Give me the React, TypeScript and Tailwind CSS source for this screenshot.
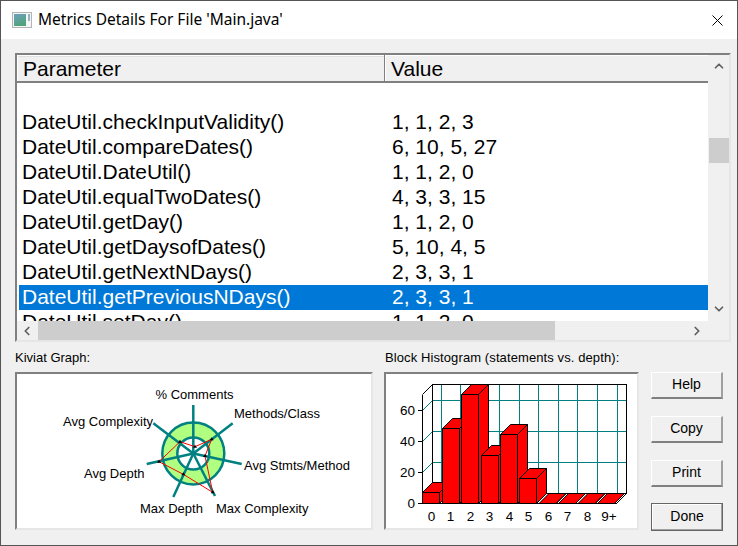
import { ChevronUp, ChevronDown, ChevronLeft, ChevronRight } from "lucide-react";

const ROWS = [
  ["", ""],
  ["DateUtil.checkInputValidity()", "1, 1, 2, 3"],
  ["DateUtil.compareDates()", "6, 10, 5, 27"],
  ["DateUtil.DateUtil()", "1, 1, 2, 0"],
  ["DateUtil.equalTwoDates()", "4, 3, 3, 15"],
  ["DateUtil.getDay()", "1, 1, 2, 0"],
  ["DateUtil.getDaysofDates()", "5, 10, 4, 5"],
  ["DateUtil.getNextNDays()", "2, 3, 3, 1"],
  ["DateUtil.getPreviousNDays()", "2, 3, 3, 1"],
  ["DateUtil.setDay()", "1, 1, 2, 0"],
];

const SPOKES = [
  [193.3, 405],
  [232.7, 423.3],
  [241.7, 464],
  [215, 496],
  [173.3, 497],
  [146.7, 464],
  [153.3, 423.3],
];

const RED = [
  [195, 446.7],
  [211.7, 439.3],
  [205, 456],
  [212.7, 492.3],
  [183.3, 474.3],
  [159, 461.7],
  [180, 441.7],
];

const KIVIAT_LABELS: [string, number, number][] = [
  ["% Comments", 155.5, 399],
  ["Methods/Class", 234, 418],
  ["Avg Complexity", 63, 426],
  ["Avg Stmts/Method", 244, 470],
  ["Avg Depth", 84, 478],
  ["Max Depth", 140, 513],
  ["Max Complexity", 216, 513],
];

const BARS = [
  [422.5, 492.5],
  [442.5, 428.5],
  [461.5, 394.5],
  [481.5, 455.5],
  [500.5, 434.5],
  [519.5, 478.5],
  [539, 503.5],
  [558.5, 503.5],
  [578, 503.5],
  [597.5, 503.5],
];

const X_LABELS: [string, number][] = [
  ["0", 431.5],
  ["1", 450.5],
  ["2", 470.5],
  ["3", 489.5],
  ["4", 509.5],
  ["5", 528.5],
  ["6", 548.5],
  ["7", 567.5],
  ["8", 587.5],
  ["9+", 609],
];

function Kiviat() {
  return (
    <svg viewBox="17 374 354 154" className="h-full w-full">
      <circle cx="193.3" cy="453.5" r="31" fill="#b0ff80" stroke="#008080" strokeWidth="2.5" />
      <circle cx="193.3" cy="453.5" r="16" fill="#fff" stroke="#008080" strokeWidth="2.5" />
      {SPOKES.map(([x, y]) => (
        <line key={x} x1="193.3" y1="453.5" x2={x} y2={y} stroke="#008080" strokeWidth="2.5" />
      ))}
      <polygon points={RED.map((p) => p.join(",")).join(" ")} fill="none" stroke="#ff0000" strokeWidth="1" />
      {RED.map(([x, y]) => (
        <polygon key={x} points={`${x - 2},${y + 1} ${x + 2},${y + 1} ${x},${y - 2}`} fill="#000" />
      ))}
      {KIVIAT_LABELS.map(([label, x, y]) => (
        <text key={label} x={x} y={y} fontSize="13" fill="#000" fontFamily="'Liberation Sans', sans-serif">
          {label}
        </text>
      ))}
    </svg>
  );
}

function Histogram() {
  return (
    <svg viewBox="386 374 251 154" className="h-full w-full" shapeRendering="crispEdges">
      {[400.5, 431.5, 462.5].map((y) => (
        <line key={y} x1="432.5" y1={y} x2="626.5" y2={y} stroke="#008080" />
      ))}
      {[441.5, 460.5, 479.5, 499.5, 519.5, 538.5, 558.5, 577.5, 597.5, 617.5].map((x) => (
        <line key={x} x1={x} y1="384.5" x2={x} y2="493.5" stroke="#008080" />
      ))}
      <g shapeRendering="auto">
        {[410.5, 441.5, 472.5].map((y) => (
          <line key={y} x1="422.5" y1={y} x2="432.5" y2={y - 10} stroke="#008080" />
        ))}
        <line x1="422.5" y1="394.5" x2="432.5" y2="384.5" stroke="#000" />
        <line x1="616.5" y1="503.5" x2="626.5" y2="493.5" stroke="#000" />
      </g>
      <path d="M432.5 493.5V384.5H626.5V493.5H432.5" fill="none" stroke="#000" />
      <path d="M422.5 394.5V503.5H616.5" fill="none" stroke="#000" />
      {[410.5, 441.5, 472.5, 503.5].map((y) => (
        <line key={y} x1="418" y1={y} x2="422.5" y2={y} stroke="#000" />
      ))}
      <g shapeRendering="auto">
        {BARS.map(([x, top]) => {
          const r = x + 17;
          return (
            <g key={x} fill="#ff0000" stroke="#000" strokeLinejoin="round">
              <polygon points={`${r},${top} ${r + 10},${top - 10} ${r + 10},493.5 ${r},503.5`} />
              <polygon points={`${x},${top} ${x + 10},${top - 10} ${r + 10},${top - 10} ${r},${top}`} />
              <rect x={x} y={top} width="17" height={503.5 - top} />
            </g>
          );
        })}
        {[
          ["60", 400, 415],
          ["40", 400, 446],
          ["20", 400, 477],
          ["0", 407.5, 508],
        ].map(([t, x, y]) => (
          <text key={t} x={x} y={y} fontSize="13.5" fill="#000" fontFamily="'Liberation Sans', sans-serif">
            {t}
          </text>
        ))}
        {X_LABELS.map(([t, x]) => (
          <text key={t} x={x} y="521" textAnchor="middle" fontSize="13.5" fill="#000" fontFamily="'Liberation Sans', sans-serif">
            {t}
          </text>
        ))}
      </g>
    </svg>
  );
}

function Btn({ label, primary }: { label: string; primary?: boolean }) {
  return (
    <div
      className={
        primary
          ? "-mt-[1px] flex h-[28px] w-[72px] items-center justify-center border border-[#666] bg-[#f0f0f0] pb-[1px] text-[14px] text-black shadow-[inset_-1px_-1px_0_#a0a0a0,inset_1px_1px_0_#fff]"
          : "flex h-[27px] w-[72px] items-center justify-center border-t border-l border-white border-r-2 border-b-2 border-r-[#a0a0a0] border-b-[#808080] bg-[#f0f0f0] pb-[1px] text-[14px] text-black"
      }
    >
      {label}
    </div>
  );
}

export default function App() {
  return (
    <div className="flex h-[546px] w-[738px] flex-col overflow-hidden border border-[#555] bg-[#f0f0f0] font-['Liberation_Sans',sans-serif]">
      <div className="flex h-[38px] shrink-0 items-center bg-white pl-[11px] pr-[14px]">
        <svg width="20" height="16" viewBox="0 0 20 16" className="shrink-0">
          <defs>
            <linearGradient id="ic" x1="0" y1="0" x2="0.4" y2="1">
              <stop offset="0" stopColor="#6f9fc0" />
              <stop offset="1" stopColor="#4fa57a" />
            </linearGradient>
          </defs>
          <rect x="0.5" y="0.5" width="19" height="15" fill="#f6f6f6" stroke="#b4b4b4" />
          <rect x="2" y="2" width="12" height="12" fill="url(#ic)" />
          <rect x="16" y="2" width="2" height="7" fill="#8fb4c8" />
        </svg>
        <span className="ml-[6px] font-['Noto_Sans',sans-serif] text-[15.5px] text-black">Metrics Details For File 'Main.java'</span>
        <svg width="11" height="11" viewBox="0 0 11 11" className="ml-auto shrink-0">
          <path d="M0.5 0.5L10.5 10.5M10.5 0.5L0.5 10.5" stroke="#000" strokeWidth="1" fill="none" />
        </svg>
      </div>

      <div className="ml-[14px] mt-[14px] flex h-[289px] w-[716px] shrink-0 flex-col border-2 border-t-[#808080] border-l-[#808080] border-r-[#e6e6e6] border-b-[#e6e6e6]">
        <div className="flex min-h-0 flex-1">
          <div className="flex w-[691px] shrink-0 flex-col">
            <div className="flex h-[28px] shrink-0 border-b-2 border-[#808080] bg-[#f0f0f0] text-[21px] leading-[25px] text-black">
              <div className="w-[367px] border-t border-l border-white pl-[5px] shadow-[inset_0_1px_0_#e0e0e0]">Parameter</div>
              <div className="w-[1px] bg-[#808080]" />
              <div className="flex-1 border-t border-l border-white pl-[5px]">Value</div>
            </div>
            <div className="min-h-0 flex-1 overflow-hidden bg-white pl-[2px] pt-[2px]">
              {ROWS.map(([name, value]) => {
                const selected = name === "DateUtil.getPreviousNDays()";
                return (
                  <div
                    key={name}
                    className={
                      selected
                        ? "flex h-[25px] items-center bg-[#0078d7] pb-[1px] text-[21px] text-white"
                        : "flex h-[25px] items-center pb-[1px] text-[21px] text-black"
                    }
                  >
                    <span className="w-[373px] shrink-0 pl-[3px]">{name}</span>
                    <span>{value}</span>
                  </div>
                );
              })}
            </div>
          </div>
          <div className="flex flex-1 flex-col items-center bg-[#f0f0f0]">
            <ChevronUp className="mt-[4px] h-[14px] w-[14px] text-[#606060]" strokeWidth={3} />
            <div className="mt-[65px] h-[25px] w-[20px] self-end bg-[#cdcdcd]" />
            <ChevronDown className="mt-auto mb-[5px] h-[14px] w-[14px] text-[#606060]" strokeWidth={3} />
          </div>
        </div>
        <div className="flex h-[19px] shrink-0 items-center bg-[#f0f0f0]">
          <ChevronLeft className="ml-[3px] h-[14px] w-[14px] shrink-0 text-[#606060]" strokeWidth={3} />
          <div className="ml-[4px] h-[19px] w-[517px] bg-[#cdcdcd]" />
          <ChevronRight className="ml-auto mr-[25px] h-[14px] w-[14px] text-[#606060]" strokeWidth={3} />
        </div>
      </div>

      <div className="mt-[8px] flex min-h-0 flex-1">
        <div className="ml-[14px] flex w-[358px] flex-col">
          <div className="h-[22px] text-[13px] leading-[16px] text-black">Kiviat Graph:</div>
          <div className="h-[158px] border-2 border-t-[#808080] border-l-[#808080] border-r-[#e6e6e6] border-b-[#e6e6e6] bg-white">
            <Kiviat />
          </div>
        </div>
        <div className="ml-[11px] flex w-[255px] flex-col">
          <div className="h-[22px] pl-[1px] text-[13px] leading-[16px] tracking-[0.1px] text-black">Block Histogram (statements vs. depth):</div>
          <div className="h-[158px] border-2 border-t-[#808080] border-l-[#808080] border-r-[#e6e6e6] border-b-[#e6e6e6] bg-white">
            <Histogram />
          </div>
        </div>
        <div className="ml-[12px] flex flex-col gap-[17px] pt-[22px]">
          <Btn label="Help" />
          <Btn label="Copy" />
          <Btn label="Print" />
          <Btn label="Done" primary />
        </div>
      </div>
    </div>
  );
}
